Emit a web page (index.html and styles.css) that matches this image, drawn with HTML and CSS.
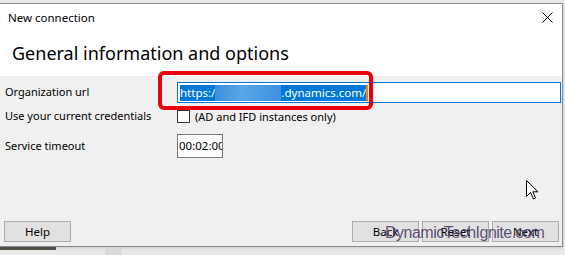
FILE: index.html
```html
<!DOCTYPE html>
<html lang="en">
<head>
<meta charset="UTF-8">
<title>New connection</title>
<link rel="stylesheet" href="styles.css">
</head>
<body>
<div class="desktop">
    <div class="window">
        <div class="titlebar">
            <span class="title">New connection</span>
            <svg class="close" width="11" height="11" viewBox="0 0 11 11">
                <path d="M0.5 0.5 L10.5 10.5 M10.5 0.5 L0.5 10.5" stroke="#000" stroke-width="1" fill="none"/>
            </svg>
        </div>
        <div class="header">
            <h1>General information and options</h1>
        </div>
        <div class="content">
            <div class="form">
                <label class="label">Organization url</label>
                <div class="field">
                    <div class="url-input">
                        <span class="selection">https:/<span class="blur"></span>.dynamics.com/</span><span class="caret"></span>
                    </div>
                </div>
                <label class="label">Use your current credentials</label>
                <div class="field check-row">
                    <span class="checkbox"></span>
                    <span>(AD and IFD instances only)</span>
                </div>
                <label class="label">Service timeout</label>
                <div class="field">
                    <div class="timeout-input">00:02:00</div>
                </div>
            </div>
            <div class="highlight"></div>
            <svg class="pointer" width="13" height="20" viewBox="0 0 13 20">
                <path d="M0.5 0.5 L0.5 16.5 L4.5 12.5 L7.5 19 L9.5 18 L6.8 11.8 L12 11.8 Z" fill="#fff" stroke="#000" stroke-width="1" stroke-linejoin="round"/>
            </svg>
            <div class="footer">
                <button class="btn">Help</button>
                <div class="nav">
                    <button class="btn">Back</button>
                    <button class="btn">Reset</button>
                    <button class="btn">Next</button>
                </div>
                <div class="watermark">DynamicTechIgnite.com</div>
            </div>
        </div>
    </div>
    <div class="taskbar">
        <span class="thumb"></span>
        <span class="tab"></span>
    </div>
</div>
</body>
</html>
```

FILE: styles.css
```css
body {
    margin: 0;
    font-family: "Noto Sans", "Open Sans", sans-serif;
    font-size: 11px;
    color: #000;
    background-color: #e9e9e9;
}
.desktop {
    width: 565px;
    height: 255px;
    overflow: hidden;
    padding-top: 3px;
    box-sizing: border-box;
}
.window {
    width: 564px;
    height: 244px;
    margin-left: -1px;
    border: 1px solid #8a8a8a;
    box-sizing: border-box;
    background-color: #fff;
    display: flex;
    flex-direction: column;
    box-shadow: 0 1px 3px rgba(0, 0, 0, 0.15);
}
.titlebar {
    height: 29px;
    display: flex;
    align-items: center;
    justify-content: space-between;
    padding: 0 9px 0 8px;
}
.title {
    font-size: 11.5px;
    margin-top: -2px;
}
.close {
    margin-top: -2px;
}
.header {
    height: 43px;
}
h1 {
    margin: 0;
    padding: 6px 0 0 12px;
    font-size: 18px;
    font-weight: normal;
    line-height: 28px;
}
.content {
    flex: 1;
    background-color: #f0f0f0;
    position: relative;
    display: flex;
    flex-direction: column;
}
.form {
    display: grid;
    grid-template-columns: 172px 1fr;
    grid-template-rows: 23px 24px 36px;
    padding: 5px 0 0 5px;
    align-items: center;
}
.label {
    margin-top: -2px;
}
.field {
    display: flex;
    align-items: center;
}
.url-input {
    width: 384px;
    height: 21px;
    box-sizing: border-box;
    border: 1px solid #0078d7;
    background-color: #fff;
    display: flex;
    align-items: center;
    padding-left: 2px;
}
.selection {
    background-color: #0078d7;
    color: #fff;
    line-height: 16px;
    font-size: 11.5px;
    display: flex;
    align-items: center;
}
.blur {
    display: inline-block;
    width: 66px;
    height: 16px;
    background: linear-gradient(90deg, #3d8fdc, #58a6e6 40%, #4b9be2 70%, #3f92df);
}
.caret {
    width: 2px;
    height: 16px;
    background-color: #f08020;
}
.check-row {
    gap: 5px;
}
.checkbox {
    width: 11px;
    height: 11px;
    border: 1px solid #333;
    background-color: #fff;
}
.timeout-input {
    width: 46px;
    height: 24px;
    box-sizing: border-box;
    border: 1px solid #7a7a7a;
    background-color: #fff;
    overflow: hidden;
    white-space: nowrap;
    line-height: 22px;
    padding-left: 1px;
    font-size: 11.5px;
}
.highlight {
    position: absolute;
    left: 158px;
    top: -5px;
    width: 215px;
    height: 39px;
    box-sizing: border-box;
    border: 4px solid #e8000b;
    border-radius: 6px;
}
.pointer {
    position: absolute;
    left: 526px;
    top: 104px;
}
.footer {
    margin-top: auto;
    display: flex;
    justify-content: space-between;
    padding: 0 3px 4px 4px;
    position: relative;
}
.nav {
    display: flex;
    gap: 3px;
}
.btn {
    width: 67px;
    height: 21px;
    border: 1px solid #adadad;
    background-color: #e1e1e1;
    font-family: "Noto Sans", sans-serif;
    font-size: 11.5px;
    color: #000;
    padding: 0;
}
.watermark {
    position: absolute;
    left: 385px;
    top: 3px;
    font-family: "Liberation Sans", sans-serif;
    font-size: 16px;
    letter-spacing: -0.5px;
    color: rgba(60, 40, 90, 0.8);
}
.taskbar {
    height: 9px;
    display: flex;
}
.thumb {
    width: 56px;
    height: 3px;
    background-color: #4d5245;
}
.tab {
    width: 16px;
    height: 9px;
    margin-left: 49px;
    background-color: #dadada;
}
```
